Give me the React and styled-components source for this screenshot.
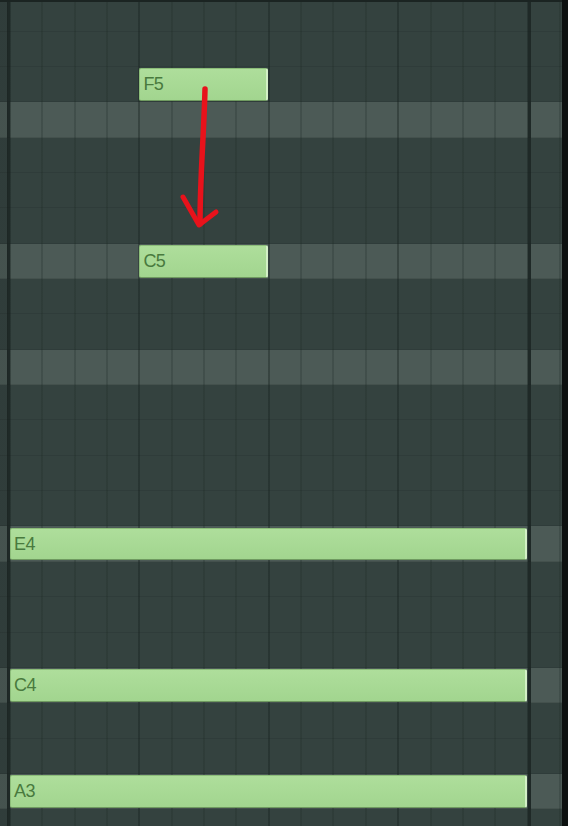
import styled, { createGlobalStyle } from "styled-components";

const ROW_H = 35.35;
const COL_W = 32.35;
const GRID_X = 10;
const TOP = -3.7;

const rows = [
  "G5", "F#5", "F5", "E5", "D#5", "D5", "C#5", "C5", "B4", "A#4", "A4", "G#4",
  "G4", "F#4", "F4", "E4", "D#4", "D4", "C#4", "C4", "B3", "A#3", "A3", "G#3",
];
const highlighted = ["E5", "C5", "A4", "E4", "C4", "A3"];

const notes = [
  { key: "F5", col: 4, len: 4 },
  { key: "C5", col: 4, len: 4 },
  { key: "E4", col: 0, len: 16 },
  { key: "C4", col: 0, len: 16 },
  { key: "A3", col: 0, len: 16 },
];

const BAR_END = GRID_X + 16 * COL_W;

const GlobalStyle = createGlobalStyle`
  html, body {
    margin: 0;
    padding: 0;
    background: #0d1110;
  }
  body {
    font-family: "Liberation Sans", Arial, sans-serif;
  }
`;

const Screen = styled.div`
  width: 568px;
  height: 826px;
  display: flex;
  overflow: hidden;
  background: #0d1110;
`;

const Roll = styled.div`
  position: relative;
  width: 562px;
  height: 826px;
  overflow: hidden;
  border-top: 2px solid #1b2422;
  box-sizing: border-box;
`;

const Rows = styled.div`
  display: flex;
  flex-direction: column;
  margin-top: ${TOP - 2}px;
`;

const Row = styled.div`
  flex: 0 0 ${ROW_H}px;
  box-sizing: border-box;
  border-bottom: 1px solid rgba(20, 30, 28, 0.14);
  background-color: ${(p) => (p.$lit ? "#4c5a56" : "#34423f")};
  background-image:
    linear-gradient(to right, rgba(10, 16, 15, 0.1) 0 ${GRID_X - 2}px, transparent ${GRID_X - 2}px),
    linear-gradient(to right, transparent 0 ${GRID_X - 3}px, #1f2927 ${GRID_X - 3}px ${GRID_X}px, transparent ${GRID_X}px),
    linear-gradient(to right, transparent 0 ${BAR_END}px, #1f2927 ${BAR_END}px ${BAR_END + 3}px, transparent ${BAR_END + 3}px),
    repeating-linear-gradient(
      to right,
      rgba(22, 32, 30, 0.38) 0 2px,
      transparent 2px ${COL_W}px,
      rgba(26, 38, 35, 0.22) ${COL_W}px ${COL_W + 2}px,
      transparent ${COL_W + 2}px ${COL_W * 2}px,
      rgba(26, 38, 35, 0.22) ${COL_W * 2}px ${COL_W * 2 + 2}px,
      transparent ${COL_W * 2 + 2}px ${COL_W * 3}px,
      rgba(26, 38, 35, 0.22) ${COL_W * 3}px ${COL_W * 3 + 2}px,
      transparent ${COL_W * 3 + 2}px ${COL_W * 4}px
    );
  background-position: 0 0, 0 0, 0 0, ${GRID_X - 1}px 0;
`;

const Note = styled.div`
  position: absolute;
  top: ${(p) => TOP - 2 + p.$row * ROW_H + 1}px;
  left: ${(p) => GRID_X + p.$col * COL_W}px;
  width: ${(p) => p.$len * COL_W - 1}px;
  height: ${ROW_H - 2.5}px;
  box-sizing: border-box;
  display: flex;
  align-items: center;
  padding-left: 3px;
  border-radius: 2px;
  background: linear-gradient(to bottom, #aede9b, #a2d58f);
  border: 1px solid #8cbd79;
  border-right: 2px solid #d3f0c6;
  border-bottom-color: #6f9a60;
  color: #497a3e;
  font-size: 18px;
  letter-spacing: -0.6px;
  line-height: 1;
`;

const Edge = styled.div`
  flex: 1;
  background: #0d1110;
`;

const Arrow = styled.svg`
  position: absolute;
  left: 0;
  top: 0;
  width: 562px;
  height: 826px;
  pointer-events: none;
`;

export default function App() {
  return (
    <>
      <GlobalStyle />
      <Screen>
        <Roll>
          <Rows>
            {rows.map((name) => (
              <Row key={name} $lit={highlighted.includes(name)} />
            ))}
          </Rows>
          {notes.map((n) => (
            <Note key={n.key} $row={rows.indexOf(n.key)} $col={n.col} $len={n.len}>
              {n.key}
            </Note>
          ))}
          <Arrow viewBox="0 0 562 826">
            <g fill="none" stroke="#e8121b" strokeLinecap="round" strokeLinejoin="round">
              <path d="M205 87 C204 130 200 175 200 222" strokeWidth="5.5" />
              <path d="M183 195 L199 223 L216 210" strokeWidth="5" />
            </g>
          </Arrow>
        </Roll>
        <Edge />
      </Screen>
    </>
  );
}
